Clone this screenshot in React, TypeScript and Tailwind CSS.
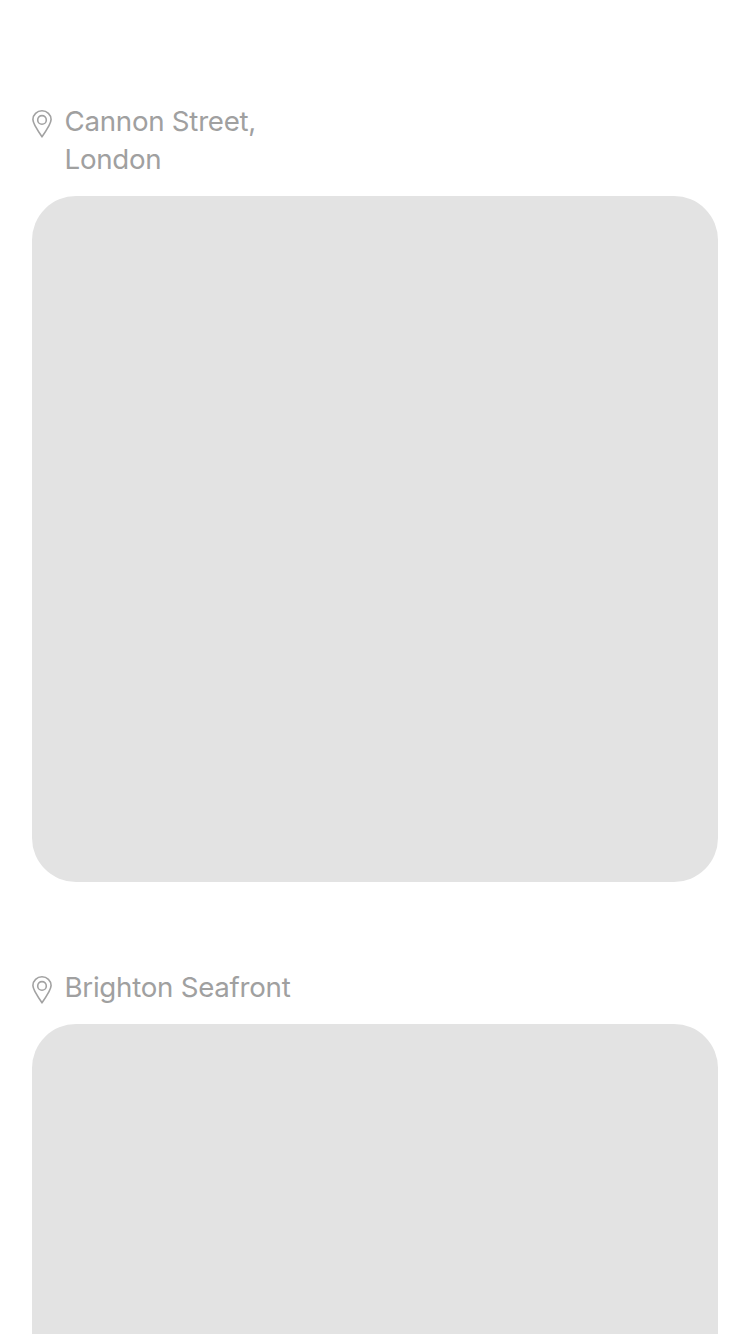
function Pin() {
  return (
    <svg className="mt-[8px] h-[28px] w-[20px] shrink-0" viewBox="0 0 20 28" fill="none" stroke="#a2a2a2" strokeWidth="1.6">
      <path d="M10 26.8C7.5 23.2 5 19.2 3 15.6C1.6 13 0.9 11.3 0.9 9.6C0.9 4.6 5 0.8 10 0.8S19.1 4.6 19.1 9.6C19.1 11.3 18.4 13 17 15.6C15 19.2 12.5 23.2 10 26.8Z" strokeLinejoin="round" />
      <circle cx="10" cy="9.9" r="4.3" />
    </svg>
  );
}

function Location({ lines }: { lines: string[] }) {
  return (
    <div className="flex gap-[12.5px] text-[27.7px] leading-[38px] tracking-[-0.27px] text-[#a0a0a0]">
      <Pin />
      <div>
        {lines.map((line) => (
          <div key={line} className="whitespace-nowrap">{line}</div>
        ))}
      </div>
    </div>
  );
}

export default function App() {
  return (
    <main className="flex h-[1334px] w-[750px] flex-col overflow-hidden bg-white px-8 pt-[102px] font-['Inter',sans-serif]">
      <Location lines={["Cannon Street,", "London"]} />
      <div className="mt-[18px] h-[686px] shrink-0 rounded-[44px] bg-[#e3e3e3]" />
      <div className="mt-[86px]">
        <Location lines={["Brighton Seafront"]} />
      </div>
      <div className="mt-[18px] h-[686px] shrink-0 rounded-[44px] bg-[#e3e3e3]" />
    </main>
  );
}
